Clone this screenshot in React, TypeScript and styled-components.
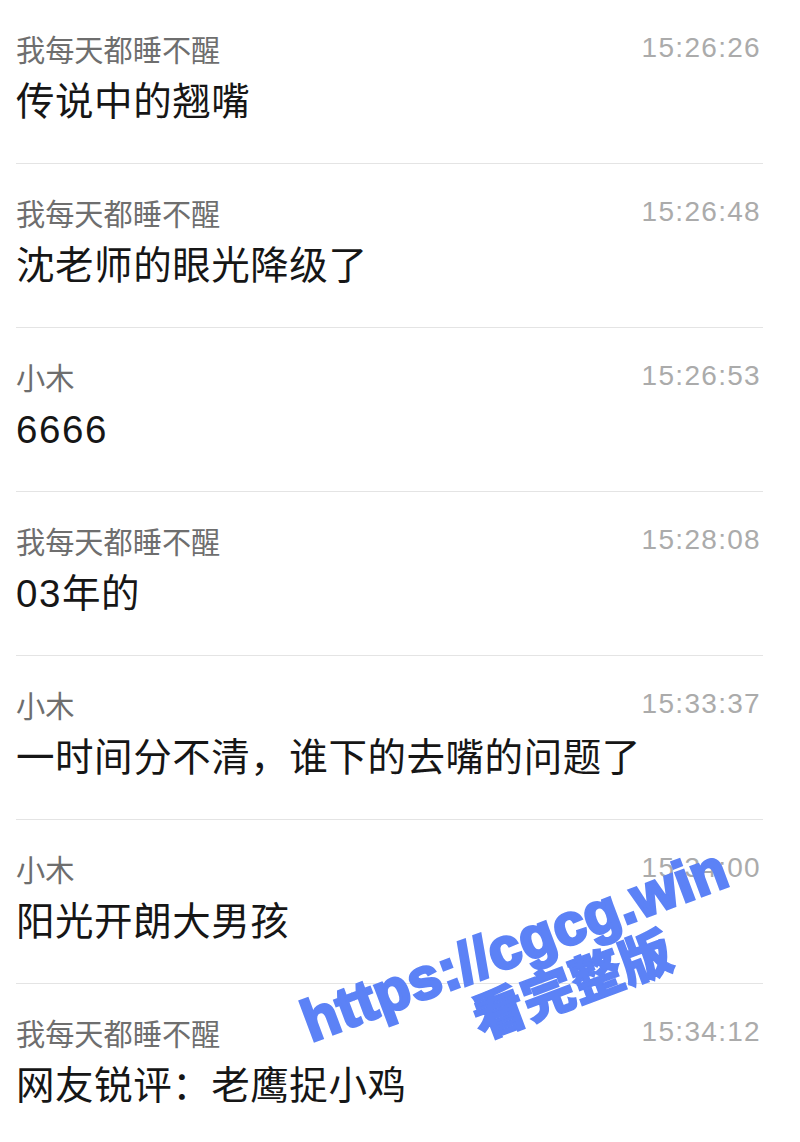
import React from "react";
import styled, { createGlobalStyle } from "styled-components";

const GlobalStyle = createGlobalStyle`
  html, body {
    margin: 0;
    padding: 0;
    background: #ffffff;
  }
  body {
    font-family: "Liberation Sans", "Noto Sans CJK SC", sans-serif;
  }
`;

const Page = styled.div`
  position: relative;
  width: 800px;
  height: 1142px;
  overflow: hidden;
  background: #ffffff;
`;

const List = styled.ul`
  list-style: none;
  margin: 0;
  padding: 0 37px 0 16px;
  display: flex;
  flex-direction: column;
`;

const Row = styled.li`
  box-sizing: border-box;
  height: 164px;
  padding-top: 30px;
  border-bottom: 1px solid #e4e4e4;
  display: flex;
  flex-direction: column;
  gap: 11px;
`;

const Header = styled.div`
  display: flex;
  align-items: center;
  justify-content: space-between;
  height: 36px;
`;

const Name = styled.span`
  font-family: "Noto Sans CJK SC", sans-serif;
  font-size: 29.2px;
  line-height: 36px;
  color: #6e6e6e;
`;

const Time = styled.span`
  font-family: "Liberation Sans", sans-serif;
  font-size: 28px;
  line-height: 36px;
  letter-spacing: 1.3px;
  color: #ababab;
  margin-right: 2px;
`;

const Message = styled.div`
  font-family: "Liberation Sans", "Noto Sans CJK SC", sans-serif;
  font-size: 38.5px;
  line-height: 50px;
  color: #161616;
  letter-spacing: 0.55px;
`;

const Digits = styled.span`
  letter-spacing: 1.6px;
`;

const Watermark = styled.div`
  position: absolute;
  left: 524px;
  top: 970px;
  transform: translate(-50%, -50%) rotate(-20.5deg);
  display: flex;
  flex-direction: column;
  align-items: center;
  color: #5c82f6;
  pointer-events: none;
  white-space: nowrap;
`;

const WatermarkUrl = styled.div`
  font-family: "Liberation Sans", sans-serif;
  font-weight: 700;
  font-size: 58px;
  line-height: 56px;
  -webkit-text-stroke: 3px #5c82f6;
  letter-spacing: 0.5px;
`;

const WatermarkTag = styled.div`
  font-family: "Noto Sans CJK SC", sans-serif;
  font-weight: 900;
  font-size: 52px;
  line-height: 54px;
  padding-left: 80px;
  -webkit-text-stroke: 1.5px #5c82f6;
`;

type Item = { name: string; time: string; text: string };

const items: Item[] = [
  { name: "我每天都睡不醒", time: "15:26:26", text: "传说中的翘嘴" },
  { name: "我每天都睡不醒", time: "15:26:48", text: "沈老师的眼光降级了" },
  { name: "小木", time: "15:26:53", text: "6666" },
  { name: "我每天都睡不醒", time: "15:28:08", text: "03年的" },
  { name: "小木", time: "15:33:37", text: "一时间分不清，谁下的去嘴的问题了" },
  { name: "小木", time: "15:34:00", text: "阳光开朗大男孩" },
  { name: "我每天都睡不醒", time: "15:34:12", text: "网友锐评：老鹰捉小鸡" },
];

function renderText(text: string) {
  return text.split(/(\d+)/).map((part, i) =>
    /^\d+$/.test(part) ? <Digits key={i}>{part}</Digits> : part
  );
}

export default function App() {
  return (
    <>
      <GlobalStyle />
      <Page>
        <List>
          {items.map((it, i) => (
            <Row key={i}>
              <Header>
                <Name>{it.name}</Name>
                <Time>{it.time}</Time>
              </Header>
              <Message>{renderText(it.text)}</Message>
            </Row>
          ))}
        </List>
        <Watermark>
          <WatermarkUrl>https://cgcg.win</WatermarkUrl>
          <WatermarkTag>看完整版</WatermarkTag>
        </Watermark>
      </Page>
    </>
  );
}
